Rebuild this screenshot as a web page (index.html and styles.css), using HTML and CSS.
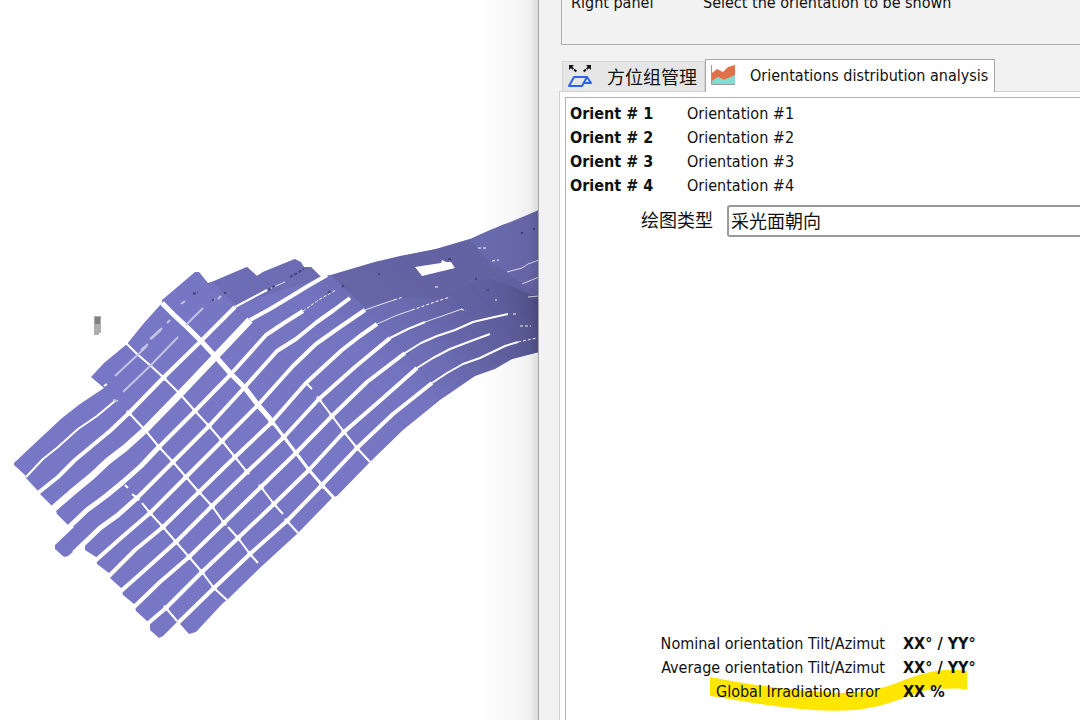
FILE: index.html
```html
<!DOCTYPE html>
<html lang="zh-CN">
<head>
<meta charset="utf-8">
<title>Orientations distribution analysis</title>
<link rel="stylesheet" href="styles.css">
</head>
<body>
<div class="app">
  <section class="scene" aria-label="3D field">
    <svg class="field" viewBox="0 0 538 720" role="img" aria-label="PV tables on terrain">
      <defs>
        <linearGradient id="slope" gradientUnits="userSpaceOnUse" x1="270" y1="400" x2="395" y2="255">
          <stop offset="0" stop-color="#7777c5"/><stop offset=".5" stop-color="#7474c0"/><stop offset="1" stop-color="#6565a8"/>
        </linearGradient>
        <linearGradient id="ridge" gradientUnits="userSpaceOnUse" x1="430" y1="340" x2="540" y2="310">
          <stop offset="0" stop-color="#5e5e9e" stop-opacity="0"/><stop offset=".65" stop-color="#5e5e9e" stop-opacity=".7"/><stop offset="1" stop-color="#53538c"/>
        </linearGradient>
      </defs>
      <path fill="url(#slope)" d="M14 463L32 446L62 418L80 404L104 388L91 377L104 363L127 344L144 323L162 303L162 300L175 289L195 272L199 272L208 283L214 281L247 267L257 276L263 272L295 259L301 262L304 267L311 267L320 276L331 275L375 262L400 256L436 249L470 239L490 230L505 224L510 223L539 210V352L512 359L495 369L475 376L440 400L403 430L370 462L337 496L332 498L298 533L262 566L228 599L222 604L196 632L189 634L181 625L177 622L163 636L159 638L150 630V624L147 621L136 611L134 604L123 595L121 588L110 578L109 573L97 564L96 557L85 550V542L68 556L64 557L55 549V545L74 527L69 526L57 514L55 507L52 506L40 494L38 491L26 478L25 475L14 465Z"/>
      <path fill="#6b6bb1" d="M212 282L247 267L257 276L263 272L295 259L304 267L311 267L322 278L267 295L236 306Z" opacity=".8"/>
      <path fill="#62629f" d="M331 275L375 262L436 249L470 239L490 265L530 298L520 318L480 323L450 297L403 298L365 307L338 282Z" opacity=".65"/>
      <path fill="#6b6bb0" d="M470 240L505 224L539 210V292L522 283L490 262Z" opacity=".8"/>
      <path fill="url(#ridge)" d="M400 298L450 290L490 278L530 294L539 297V352L512 359L475 376L440 400L400 350Z"/>
      <g class="fold">
        <path d="M331 275L380 320L420 367L440 400M400 256L440 294L475 333L512 359M436 249L475 290L510 330L530 354M472 239L530 297L539 318M208 283L235 307L266 336L307 383M258 276L304 312L350 360L405 427"/>
      </g>
      <g class="gap">
        <path class="thin" d="M26 477L43 459L58 447L78 429L97 416L115 401"/>
        <path d="M38 493L58 477L75 460L93 445L110 431L129 413L163 378L201 341L235 307"/>
        <path class="thin" d="M235 307L250 299L267 290"/>
        <path class="wide" d="M53 509L75 490L92 476L108 461L125 448L145 430L180 394L216 356L250 320"/>
        <path d="M250 320L270 309L290 297L308 286L327 275" />
        <path class="thick" d="M66 530L87 510L106 496L123 482L141 466L159 447"/>
        <path d="M159 447L195 411L231 374L266 335L284 323L303 311"/>
        <path class="thick" d="M74 553L100 528L118 515L137 498"/>
        <path d="M137 498L173 462L209 426L244 388L277 351L296 339L317 322L334 310L350 298"/>
        <path d="M95 561L121 538L150 513L186 477L222 441L258 405L293 366L316 344L340 327L365 310"/>
        <path d="M108 577L135 550L163 527L199 492L235 457L271 423L306 383L342 350L360 336L377 324"/>
        <path d="M120 592L147 568L176 542L212 506L247 472L284 437L319 399L355 367L390 338"/>
        <path d="M133 608L160 582L189 557L224 523L261 487L296 453L332 416L367 382L405 353"/>
        <path d="M146 625L166 608L202 572L238 538L274 504L309 470L344 432L382 399L417 368"/>
        <path d="M178 623L214 588L250 554L287 521L322 485L357 448L393 414L432 383"/>
        <path class="thin" d="M390 338L408 329L425 322M405 353L421 343L437 336L455 330L473 322L490 318L508 314M417 368L433 358L450 349L471 341L490 334M432 383L447 373L463 364L480 358L505 346L518 342"/>
        <path class="hair" d="M267 290L285 282M365 310L382 304L394 300M377 324L395 316L412 310M425 322L445 315L462 309M507 272L522 268L528 264L539 260M522 284L539 277M528 297L539 296"/>
        <path class="dots" d="M394 300L403 297M412 310L432 303L450 297M518 342L537 338M303 311L320 299L336 290M478 248H486M492 261L499 260M435 287H440M520 326H531M461 309L466 311M513 314H518M495 300L497 300"/>
      </g>
      <g class="seam">
        <path class="main" d="M162 303L174 315L188 328L201 341L216 357L231 374L245 388L258 405L271 420"/>
        <path class="mid" d="M271 420L284 437L296 453L309 470L322 485L334 498"/>
        <path d="M126 343L137 354L151 366L164 378L180 394L195 411L209 426L222 441L235 457L247 472M261 487L274 504L283 514M287 521L298 533M104 386L107 384M129 413L145 430L159 447L173 462L186 477L199 492L212 506L224 523M228 527L238 538L250 554L258 563M125 485L128 488M132 494L137 498M142 503L150 513L163 527L176 542L189 557L202 572L214 588L227 600M166 608L177 621M306 383L312 389M319 399L332 416L344 432L357 448L370 462"/>
      </g>
      <g class="node">
        <path d="M201 341h0M231 374h0M244 388h0M258 405h0M271 423h0M284 437h0M296 453h0M309 470h0M322 486h0M164 378h0M195 411h0M209 426h0M222 441h0M235 457h0M247 472h0M261 487h0M274 504h0M287 521h0M129 413h0M145 430h0M159 447h0M173 462h0M186 477h0M199 492h0M212 506h0M224 523h0M238 538h0M250 554h0M137 498h0M150 513h0M163 527h0M176 542h0M189 557h0M202 572h0M214 588h0M166 608h0M319 399h0M332 416h0M344 432h0M357 448h0"/>
      </g>
      <path class="ghost" d="M115 376L147 346M151 339L161 330M141 350L148 344M150 339L162 328M167 323L170 320M181 304L185 301M123 392L151 365M151 365L178 337M186 325L203 308M212 301L215 299M218 299L221 296M113 400L118 401"/>
      <path class="speck" d="M193 294L198 292M212 301L214 299M268 290L276 285M290 277L304 269M328 293L332 290M342 287L344 285M378 274h2M448 259h3M475 279h2M487 290h2M521 233h2M533 229h2M224 293h2"/>
      <path fill="#fff" d="M415 267L441 263L442 260L446 262H451L455 268L422 276Z"/>
      <path fill="#aeaeae" d="M94 316H101V333H99V335H94Z"/><path fill="#808080" d="M95 317H100V324H95Z"/>
    </svg>
  </section>

  <main class="panel">
    <div class="group"><span>Right panel</span><span>Select the orientation to be shown</span></div>
    <div class="tabs" role="tablist">
      <button class="tab cjk" type="button" role="tab" aria-selected="false">
        <svg class="icon" viewBox="0 0 26 26" aria-hidden="true">
          <path fill="none" stroke="#111" stroke-width="2" stroke-dasharray="3 1" d="M4 4L10 9M22 4L16 9"/><path fill="#111" d="M2 2H7L2 7ZM24 2H19L24 7Z"/>
          <path fill="none" stroke="#2a62e8" stroke-width="2" stroke-linejoin="round" d="M7 14H20L15 23H2ZM20 14L24 20H17"/>
        </svg>方位组管理</button>
      <button class="tab active" type="button" role="tab" aria-selected="true">
        <svg class="icon" viewBox="0 0 26 26" aria-hidden="true">
          <path fill="#7fddd2" d="M2 18L8 14L14 17L25 11V21H2Z"/>
          <path fill="#df7047" d="M2 10L7 6L13 9L18 4L25 2V12L14 17L8 14L2 18Z"/>
          <path fill="none" stroke="#9a9a9a" stroke-width="1" d="M1.500 2V21.500H25"/>
        </svg>Orientations distribution analysis</button>
    </div>
    <div class="page">
      <div class="sheet">
        <dl class="orients">
          <dt>Orient # 1</dt><dd>Orientation #1</dd>
          <dt>Orient # 2</dt><dd>Orientation #2</dd>
          <dt>Orient # 3</dt><dd>Orientation #3</dd>
          <dt>Orient # 4</dt><dd>Orientation #4</dd>
        </dl>
        <div class="plot">
          <label for="plot-type">绘图类型</label>
          <select id="plot-type"><option>采光面朝向</option></select>
        </div>
        <div class="results">
          <svg class="marker" viewBox="0 0 258 42" aria-hidden="true"><path fill="#ffe600" d="M0 7C40 15 85 21 130 23C180 23 190 7 226 1C240 -1 250 0 257 1V20C247 17 238 20 226 18C205 21 180 37 145 40C95 44 35 31 0 26Z"/></svg>
          <dl>
            <dt>Nominal orientation Tilt/Azimut</dt><dd>XX° / YY°</dd>
            <dt>Average orientation Tilt/Azimut</dt><dd>XX° / YY°</dd>
            <dt class="inset">Global Irradiation error</dt><dd>XX %</dd>
          </dl>
        </div>
      </div>
    </div>
  </main>
</div>
</body>
</html>
```
FILE: styles.css
```css
* { box-sizing: border-box; }
body {
  margin: 0;
  background: #fff;
  color: #111;
  font: 16px/24px "DejaVu Sans Condensed", "Noto Sans CJK SC", sans-serif;
}
dl, dd { margin: 0; }
.app {
  display: grid;
  grid-template-columns: minmax(0, 538fr) minmax(0, 542fr);
  min-height: 100vh;
  overflow: hidden;
}
.scene {
  position: relative;
  background: #fff;
}
.scene::after {
  content: "";
  position: absolute;
  inset: 0 0 0 auto;
  width: 60px;
  background: linear-gradient(to right, rgba(0,0,0,0), rgba(0,0,0,.03) 60%, rgba(0,0,0,.06) 85%, rgba(0,0,0,.14));
}
.field { display: block; width: 100%; }
.fold { fill: none; stroke: #50508f; stroke-opacity: .15; stroke-width: 1; }
.gap, .seam, .node { fill: none; stroke: #fff; stroke-linejoin: round; }
.gap { stroke-width: 4; }
.gap .thin { stroke-width: 2; }
.gap .thick { stroke-width: 5; }
.gap .wide { stroke-width: 7; }
.gap .hair { stroke-width: 1; stroke-opacity: .8; }
.gap .dots { stroke-width: 1; stroke-dasharray: 3 2; }
.seam { stroke-width: 2; }
.seam .main { stroke-width: 5; }
.seam .mid { stroke-width: 3; }
.node { stroke-width: 5; stroke-linecap: square; }
.ghost { fill: none; stroke: #c3c3e6; stroke-width: 2; }
.speck { fill: none; stroke: #414174; stroke-width: 2; stroke-dasharray: 3 2; }

.panel {
  display: flex;
  flex-direction: column;
  min-width: 0;
  padding-left: 20px;
  background: #f2f2f2;
  border-left: 1px solid #a8a8a8;
}
.group {
  display: grid;
  grid-template-columns: 132px 1fr;
  height: 54px;
  margin: -9px 0 0 2px;
  padding-left: 9px;
  border: solid #adadad;
  border-width: 0 0 1px 1px;
  white-space: nowrap;
}
.tabs {
  display: flex;
  align-items: flex-end;
  height: 46px;
  padding-left: 3px;
}
.tab {
  display: flex;
  align-items: center;
  height: 30px;
  padding: 0 6px 0 4px;
  border: 1px solid #d4d4d4;
  border-bottom: 0;
  background: #e6e6e6;
  color: inherit;
  font: inherit;
  white-space: nowrap;
}
.tab.cjk { gap: 14px; line-height: 24px; padding-bottom: 2px; padding-right: 7px; }
.tab.active {
  position: relative;
  z-index: 1;
  gap: 14px;
  height: 33px;
  margin-bottom: -1px;
  border: 1px solid #a8a8a8;
  border-bottom: 0;
  background: #fff;
}
.icon { flex: none; width: 26px; height: 26px; }
.cjk, .plot, .plot select {
  font-family: "Noto Sans CJK SC", sans-serif;
  font-size: 18px;
}
.page {
  display: flex;
  flex: 1;
  padding: 5px 0 0 5px;
  border: solid #d0d0d0;
  border-width: 1px 0 0 1px;
  background: #fff;
}
.sheet {
  display: flex;
  flex: 1;
  flex-direction: column;
  min-width: 0;
  padding: 4px 0 16px 4px;
  border: solid #b0b0b0;
  border-width: 1px 0 0 1px;
}
.orients {
  display: grid;
  grid-template-columns: 117px 1fr;
}
.orients dt, .results dd { font-weight: bold; }
.plot {
  display: grid;
  grid-template-columns: 143px 1fr;
  gap: 14px;
  align-items: center;
  margin-top: 7px;
}
.plot label { padding-bottom: 4px; text-align: right; }
.plot select {
  height: 32px;
  width: 100%;
  padding: 0 2px 4px;
  appearance: none;
  border: 2px solid #999;
  border-right: 0;
  border-radius: 3px 0 0 3px;
  background: #fff;
  color: #111;
}
.results {
  position: relative;
  margin-top: auto;
}
.results dl {
  position: relative;
  display: grid;
  grid-template-columns: 315px 1fr;
  column-gap: 18px;
  white-space: nowrap;
}
.results dt { text-align: right; }
.results .inset { padding-right: 5px; }
.marker {
  position: absolute;
  left: 140px;
  bottom: -8px;
  width: 258px;
  height: 42px;
}
```
